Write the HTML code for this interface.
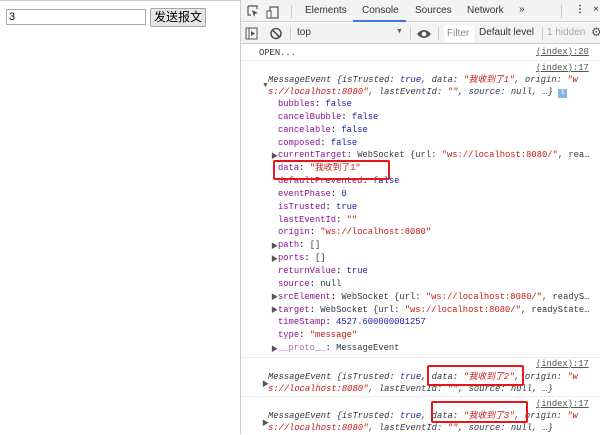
<!DOCTYPE html>
<html><head><meta charset="utf-8"><style>
*{margin:0;padding:0;box-sizing:border-box}
body{width:600px;height:434px;overflow:hidden;background:#fff;font-family:"Liberation Sans","Noto Sans CJK SC",sans-serif;position:relative}
.a{position:absolute;white-space:nowrap}
.m{font-family:"Liberation Mono","Noto Sans CJK SC",monospace;font-size:8.8px;line-height:12.8px}
.k{color:#881391}.s{color:#c41a16}.b{color:#1a1aa6}.g{color:#303942}.gr{color:#808080}
.i{font-style:italic}
.tri{font-size:7px;color:#555}
.sep{position:absolute;left:241px;width:359px;height:1px;background:#ececec}
.lnk{color:#545454;text-decoration:underline;font-family:"Liberation Mono",monospace;font-size:8.8px}
.box{position:absolute;border:2px solid #e8161b;border-radius:2px}
.tb{font-size:10px;color:#333}
</style></head><body>
<div class="a" style="left:0;top:0;width:600px;height:1px;background:#ccc"></div>
<div class="a" style="left:6px;top:9px;width:140px;height:16px;border:1px solid #a9a9a9;font-size:11px;line-height:14px;padding-left:2px">3</div>
<div class="a" style="left:150px;top:8px;width:56px;height:19px;border:1px solid #a6a6a6;background:#e6e6e6;font-size:12px;line-height:17px;text-align:center;border-radius:2px">发送报文</div>

<div class="a" style="left:240px;top:0;width:1px;height:434px;background:#ccc"></div>
<div class="a" style="left:241px;top:0;width:359px;height:22px;background:#f3f3f3;border-bottom:1px solid #ccc"></div>
<div class="a" style="left:241px;top:23px;width:359px;height:21px;background:#f3f3f3;border-bottom:1px solid #ccc"></div>
<svg class="a" style="left:246px;top:4px" width="40" height="16"><path d="M2 2h9v3M2 2v9h3" fill="none" stroke="#555" stroke-width="1.2"/><path d="M6 6l6 3-3 1-1 3z" fill="#555"/><rect x="24" y="3" width="8" height="11" fill="none" stroke="#555" stroke-width="1.2"/><rect x="21" y="7" width="4" height="7" fill="#fff" stroke="#555"/></svg>
<div class="a" style="left:291px;top:5px;width:1px;height:13px;background:#ccc"></div>
<div class="a tb" style="left:305px;top:5px">Elements</div>
<div class="a tb" style="left:362px;top:5px">Console</div>
<div class="a" style="left:353px;top:20px;width:53px;height:2px;background:#3879d9"></div>
<div class="a tb" style="left:415px;top:5px">Sources</div>
<div class="a tb" style="left:467px;top:5px">Network</div>
<div class="a tb" style="left:519px;top:4px">»</div>
<div class="a" style="left:561px;top:5px;width:1px;height:13px;background:#ccc"></div>
<div class="a tb" style="left:575px;top:4px;font-weight:bold">⋮</div>
<div class="a tb" style="left:593px;top:4px">×</div>

<svg class="a" style="left:245px;top:27px" width="40" height="14"><rect x="1" y="1" width="11" height="11" fill="none" stroke="#555"/><path d="M4 1v11" stroke="#555"/><path d="M6 4l4 2.5-4 2.5z" fill="#555"/><circle cx="31" cy="6.5" r="5" fill="none" stroke="#555" stroke-width="1.6"/><path d="M27.5 3l7 7" stroke="#555" stroke-width="1.6"/></svg>
<div class="a" style="left:290px;top:27px;width:1px;height:13px;background:#ccc"></div>
<div class="a tb" style="left:297px;top:27px">top</div>
<div class="a" style="left:396px;top:28px;font-size:7px;color:#555">▼</div>
<div class="a" style="left:410px;top:27px;width:1px;height:13px;background:#ccc"></div>
<svg class="a" style="left:416px;top:28px" width="16" height="12"><path d="M1 6Q8 -2 15 6Q8 14 1 6z" fill="#555"/><circle cx="8" cy="6" r="2.3" fill="#fff"/></svg>
<div class="a" style="left:438px;top:27px;width:1px;height:13px;background:#ccc"></div>
<div class="a" style="left:444px;top:25px;width:30px;height:17px;background:#fff"></div>
<div class="a tb" style="left:447px;top:28px;color:#888">Filter</div>
<div class="a tb" style="left:479px;top:27px">Default level</div>
<div class="a" style="left:542px;top:27px;width:1px;height:13px;background:#ccc"></div>
<div class="a tb" style="left:547px;top:27px;color:#aaa">1 hidden</div>
<div class="a" style="left:591px;top:25px;font-size:12px;color:#555">⚙</div>

<div class="a m g" style="left:259px;top:47px">OPEN...</div>
<div class="a lnk" style="left:536px;top:47px">(index):20</div>
<div class="sep" style="top:60px"></div>
<div class="a lnk" style="left:536px;top:63px">(index):17</div>
<div class="a tri" style="left:262px;top:82px">▼</div>
<div class="a m g i" style="left:268px;top:74px">MessageEvent {isTrusted: <span class="b">true</span>, data: <span class="s">"我收到了1"</span>, origin: <span class="s">"w</span></div>
<div class="a m g i" style="left:268px;top:86px"><span class="s">s://localhost:8080"</span>, lastEventId: <span class="s">""</span>, source: null, …} <span style="display:inline-block;width:9px;height:9px;background:#8ab4e8;color:#fff;font-size:7px;line-height:9px;text-align:center;font-style:normal">i</span></div>

<div class="a m" style="left:278px;top:98px;line-height:12.85px">
<span class="k">bubbles</span>: <span class="b">false</span><br>
<span class="k">cancelBubble</span>: <span class="b">false</span><br>
<span class="k">cancelable</span>: <span class="b">false</span><br>
<span class="k">composed</span>: <span class="b">false</span><br>
<span class="k">currentTarget</span>: <span class="g">WebSocket {url: <span class="s">"ws://localhost:8080/"</span>, rea…</span><br>
<span class="k">data</span>: <span class="s">"我收到了1"</span><br>
<span class="k">defaultPrevented</span>: <span class="b">false</span><br>
<span class="k">eventPhase</span>: <span class="b">0</span><br>
<span class="k">isTrusted</span>: <span class="b">true</span><br>
<span class="k">lastEventId</span>: <span class="s">""</span><br>
<span class="k">origin</span>: <span class="s">"ws://localhost:8080"</span><br>
<span class="k">path</span>: <span class="g">[]</span><br>
<span class="k">ports</span>: <span class="g">[]</span><br>
<span class="k">returnValue</span>: <span class="b">true</span><br>
<span class="k">source</span>: <span class="g">null</span><br>
<span class="k">srcElement</span>: <span class="g">WebSocket {url: <span class="s">"ws://localhost:8080/"</span>, readyS…</span><br>
<span class="k">target</span>: <span class="g">WebSocket {url: <span class="s">"ws://localhost:8080/"</span>, readyState…</span><br>
<span class="k">timeStamp</span>: <span class="b">4527.600000001257</span><br>
<span class="k">type</span>: <span class="s">"message"</span><br>
<span class="k" style="color:#a66fb0">__proto__</span>: <span class="g">MessageEvent</span>
</div>
<div class="a tri" style="left:271px;top:151px">▶</div>
<div class="a tri" style="left:271px;top:241px">▶</div>
<div class="a tri" style="left:271px;top:254px">▶</div>
<div class="a tri" style="left:271px;top:292px">▶</div>
<div class="a tri" style="left:271px;top:305px">▶</div>
<div class="a tri" style="left:271px;top:344px">▶</div>
<div class="box" style="left:273px;top:160px;width:117px;height:20px"></div>

<div class="sep" style="top:357px"></div>
<div class="a lnk" style="left:536px;top:359px">(index):17</div>
<div class="a tri" style="left:262px;top:379px">▶</div>
<div class="a m g i" style="left:268px;top:371px">MessageEvent {isTrusted: <span class="b">true</span>, data: <span class="s">"我收到了2"</span>, origin: <span class="s">"w</span></div>
<div class="a m g i" style="left:268px;top:383px"><span class="s">s://localhost:8080"</span>, lastEventId: <span class="s">""</span>, source: null, …}</div>
<div class="box" style="left:427px;top:365px;width:97px;height:21px"></div>

<div class="sep" style="top:396px"></div>
<div class="a lnk" style="left:536px;top:399px">(index):17</div>
<div class="a tri" style="left:262px;top:418px">▶</div>
<div class="a m g i" style="left:268px;top:410px">MessageEvent {isTrusted: <span class="b">true</span>, data: <span class="s">"我收到了3"</span>, origin: <span class="s">"w</span></div>
<div class="a m g i" style="left:268px;top:422px"><span class="s">s://localhost:8080"</span>, lastEventId: <span class="s">""</span>, source: null, …}</div>
<div class="box" style="left:431px;top:401px;width:97px;height:22px"></div>
</body></html>
